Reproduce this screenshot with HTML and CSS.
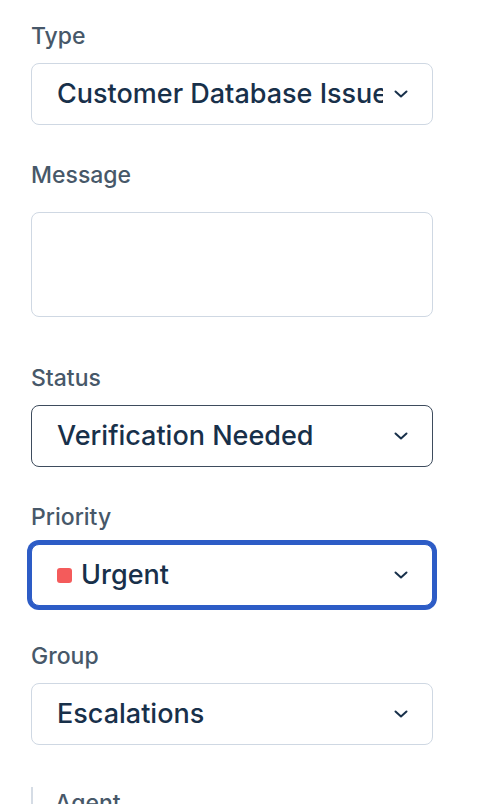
FILE: index.html
```html
<!DOCTYPE html>
<html lang="en">
<head>
<meta charset="utf-8">
<title>Ticket form</title>
<link rel="stylesheet" href="styles.css">
</head>
<body>
<form class="form">
  <div class="field">
    <div class="label">Type</div>
    <div class="select">
      <span class="value">Customer Database Issue</span>
      <svg class="chev" viewBox="0 0 14 8" width="14" height="8"><path d="M1.5 1.5 L7 6.5 L12.5 1.5" fill="none" stroke="currentColor" stroke-width="2" stroke-linecap="round" stroke-linejoin="round"/></svg>
    </div>
  </div>
  <div class="field field-message">
    <div class="label">Message</div>
    <div class="textarea"></div>
  </div>
  <div class="field">
    <div class="label">Status</div>
    <div class="select select-hover">
      <span class="value">Verification Needed</span>
      <svg class="chev" viewBox="0 0 14 8" width="14" height="8"><path d="M1.5 1.5 L7 6.5 L12.5 1.5" fill="none" stroke="currentColor" stroke-width="2" stroke-linecap="round" stroke-linejoin="round"/></svg>
    </div>
  </div>
  <div class="field">
    <div class="label">Priority</div>
    <div class="select select-focus">
      <span class="dot"></span>
      <span class="value">Urgent</span>
      <svg class="chev" viewBox="0 0 14 8" width="14" height="8"><path d="M1.5 1.5 L7 6.5 L12.5 1.5" fill="none" stroke="currentColor" stroke-width="2" stroke-linecap="round" stroke-linejoin="round"/></svg>
    </div>
  </div>
  <div class="field">
    <div class="label">Group</div>
    <div class="select">
      <span class="value">Escalations</span>
      <svg class="chev" viewBox="0 0 14 8" width="14" height="8"><path d="M1.5 1.5 L7 6.5 L12.5 1.5" fill="none" stroke="currentColor" stroke-width="2" stroke-linecap="round" stroke-linejoin="round"/></svg>
    </div>
  </div>
  <div class="subsection">
    <div class="label">Agent</div>
  </div>
</form>
</body>
</html>
```

FILE: styles.css
```css
html, body {
  margin: 0;
  padding: 0;
  background: #ffffff;
}
body {
  font-family: Inter, "Noto Sans", "Liberation Sans", sans-serif;
  overflow: hidden;
  height: 804px;
}
.form {
  width: 402px;
  padding: 22px 0 0 31px;
  display: flex;
  flex-direction: column;
}
.field {
  display: flex;
  flex-direction: column;
  gap: 13px;
  margin-bottom: 36px;
}
.field-message {
  gap: 23px;
  margin-bottom: 47px;
}
.label {
  font-size: 23px;
  line-height: 28px;
  font-weight: 500;
  color: #475869;
}
.select {
  box-sizing: border-box;
  height: 62px;
  border: 1px solid #cfd8e3;
  border-radius: 8px;
  display: flex;
  align-items: center;
  padding: 0 24px 0 25px;
  color: #18304a;
  background: #fff;
}
.select-hover {
  border-color: #3e4c5d;
}
.select-focus {
  border-color: #2d5cc6;
  box-shadow: 0 0 0 4px #2d5cc6;
}
.value {
  flex: 1;
  min-width: 0;
  font-size: 27px;
  line-height: 34px;
  font-weight: 500;
  white-space: nowrap;
  overflow: hidden;
  margin-right: 11px;
}
.dot {
  width: 15px;
  height: 15px;
  border-radius: 3px;
  background: #f45b5b;
  margin-right: 9px;
  flex: none;
}
.chev {
  flex: none;
  color: #18304a;
}
.textarea {
  box-sizing: border-box;
  height: 105px;
  border: 1px solid #cfd8e3;
  border-radius: 8px;
  background: #fff;
}
.subsection {
  border-left: 2px solid #d5dce5;
  padding: 2px 0 0 22px;
  margin-top: 6px;
}
```
